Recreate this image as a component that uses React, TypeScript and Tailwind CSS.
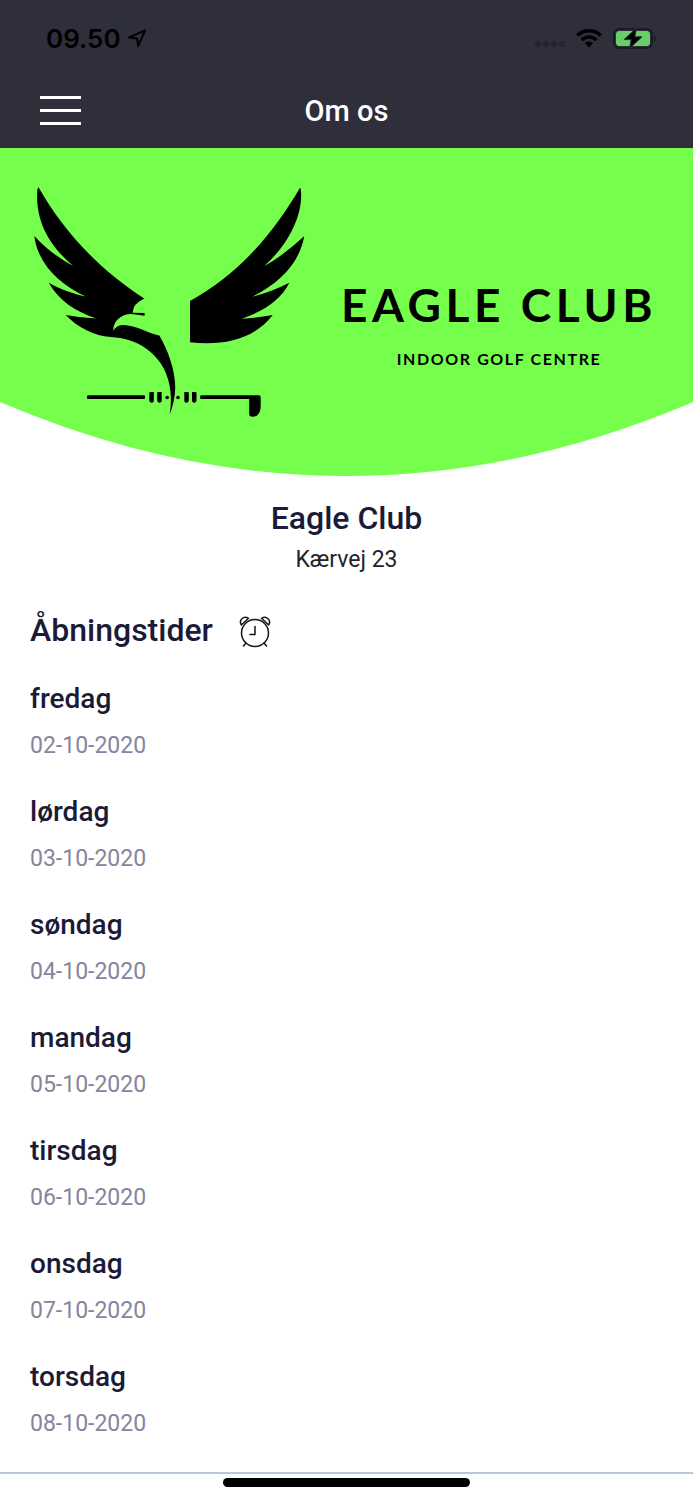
const openingDays = [
  { day: "fredag", date: "02-10-2020" },
  { day: "lørdag", date: "03-10-2020" },
  { day: "søndag", date: "04-10-2020" },
  { day: "mandag", date: "05-10-2020" },
  { day: "tirsdag", date: "06-10-2020" },
  { day: "onsdag", date: "07-10-2020" },
  { day: "torsdag", date: "08-10-2020" },
];

function LocationArrow() {
  return (
    <svg className="h-5 w-5" viewBox="0 0 20 20" fill="none" stroke="black" strokeWidth="2" strokeLinejoin="round">
      <path d="M18 2.5 L2.2 9.4 L10 10.4 L11.2 17.8 Z" />
    </svg>
  );
}

function WifiIcon() {
  return (
    <svg className="h-5 w-7" viewBox="0 0 28 20">
      <path d="M1 6.3 A18.5 18.5 0 0 1 27 6.3 L24.4 8.8 A14.8 14.8 0 0 0 3.6 8.8 Z" />
      <path d="M5.4 10.7 A12.3 12.3 0 0 1 22.6 10.7 L20 13.3 A8.6 8.6 0 0 0 8 13.3 Z" />
      <path d="M9.8 15.1 A6 6 0 0 1 18.2 15.1 L14 19.6 Z" />
    </svg>
  );
}

function BatteryIcon() {
  return (
    <svg className="h-6 w-11" viewBox="0 0 44 24">
      <rect x="1" y="3" width="38" height="19" rx="5.5" fill="none" stroke="#1c1b25" strokeWidth="2" />
      <rect x="3" y="5" width="34" height="15" rx="3.5" fill="#68ce67" />
      <path d="M41 9 a4.5 4.5 0 0 1 0 7 Z" fill="#1c1b25" />
      <path d="M23.5 2 L11 13.6 H18.2 L16.5 22.5 L29 10.8 H21.8 Z" stroke="#2f2e3b" strokeWidth="1" />
    </svg>
  );
}

function EagleLogo() {
  return (
    <svg className="w-[271px] shrink-0" viewBox="34 187 271 230" role="img" aria-label="Eagle Club">
      <path d="M38.5 187.3 C62 228 93 265 144.3 298.5 Q132.5 304 132.7 312.7 L144.6 313 V315.8 L131.7 314 C120 314 113 322 113.3 330.8 Q116.5 325 123.3 325 C137 325.5 146 332.5 159.3 335.5 C168 350 175.5 371 175.2 388 Q175 401 169.7 414.5 Q171.5 403 170.5 392 C167.5 358 141 339 113.3 337.3 C94 336.5 77 327 65.7 315 Q80 317.8 96 318.4 C76 311.5 59 301 48.7 282.7 C61 289.5 74 294 85.7 296.4 C59 284.5 37.5 263 34.3 236 C47 249.5 60 259 73.3 265.9 C51 247.5 34.5 222 37.4 189 Z" />
      <path d="M300 187.8 C272 236 238 274 190 301 V342.3 C223 346 254 339.5 272.7 315 Q257 317.8 241.7 318.7 C263 311.5 281 300 289.3 282.7 Q271 292 252.3 296.6 C280 283 299.5 263 304.3 236 C290 249 276 260 264.3 266 C286 247 304 216 300.8 189 Z" />
      <rect x="87" y="395.3" width="58" height="3.8" rx="1.2" />
      <path d="M149.3 393 q0-1 1-1 h3.5 v8 q0 2.8-2 2.8 q-2.5 0-2.5-3 Z" />
      <path d="M157.2 393 q0-1 1-1 h3.5 v8 q0 2.8-2 2.8 q-2.5 0-2.5-3 Z" />
      <circle cx="167.2" cy="397.5" r="1.8" />
      <circle cx="178" cy="397.5" r="1.8" />
      <path d="M184.3 392 h3.5 q1 0 1 1 v7 q0 2.8-2.6 2.8 q-1.9 0-1.9-2.8 Z" />
      <path d="M192 392 h3.5 q1 0 1 1 v7 q0 2.8-2.6 2.8 q-1.9 0-1.9-2.8 Z" />
      <path d="M201.3 395.3 H258.7 Q260.7 395.3 260.7 397.5 V406 Q260.7 416.7 252.3 416.7 Q249.2 416.7 249.2 413.5 V399.1 H201.3 Q200 399.1 200 397.2 Q200 395.3 201.3 395.3 Z" />
    </svg>
  );
}

function AlarmClock() {
  return (
    <svg className="h-8 w-8" viewBox="0 0 32 32" fill="none" stroke="#15151c" strokeWidth="1.5" strokeLinecap="round" strokeLinejoin="round">
      <circle cx="16" cy="17" r="13.5" />
      <path d="M16 10.5 V18.5 H11" />
      <path d="M7 27 L4.5 30 M25 27 L27.5 30" />
      <path d="M2.3 9 C-.5 4 4.5 -.5 9.5 2.3 Z" />
      <path d="M29.7 9 C32.5 4 27.5 -.5 22.5 2.3 Z" />
    </svg>
  );
}

function Header() {
  return (
    <header className="bg-[#2f2e3b]">
      <div className="flex h-[74px] items-center justify-between pt-0.5 pr-9 pl-[46px]">
        <div className="flex items-center gap-1.5">
          <span className="pt-0.5 font-['Inter',sans-serif] text-[26px] leading-8 font-semibold text-black">09.50</span>
          <LocationArrow />
        </div>
        <div className="flex items-center gap-2.5">
          <div className="flex gap-0.5 pt-3">
            <span className="size-1.5 rounded-full bg-[#242430]" />
            <span className="size-1.5 rounded-full bg-[#242430]" />
            <span className="size-1.5 rounded-full bg-[#242430]" />
            <span className="size-1.5 rounded-full bg-[#242430]" />
          </div>
          <WifiIcon />
          <BatteryIcon />
        </div>
      </div>
      <div className="grid h-[74px] grid-cols-[1fr_auto_1fr] items-center px-10">
        <button type="button" aria-label="Menu" className="flex w-[41px] flex-col gap-[10px] pb-0.5">
          <span className="h-[3px] w-full bg-white" />
          <span className="h-[3px] w-full bg-white" />
          <span className="h-[3px] w-full bg-white" />
        </button>
        <h1 className="text-[29px] leading-9 font-medium text-white">Om os</h1>
      </div>
    </header>
  );
}

function Hero() {
  return (
    <section className="relative">
      <svg className="absolute inset-0 h-full w-full" viewBox="0 0 693 329" preserveAspectRatio="none">
        <path d="M0 0 H693 V254 Q346 402 0 254 Z" fill="#75ff4c" />
      </svg>
      <div className="relative flex items-start pt-[39px] pb-[60px] pl-[34px]">
        <EagleLogo />
        <div className="flex-1 pt-[94px] text-center font-['Lato',sans-serif] font-bold whitespace-nowrap text-black">
          <p className="text-[46px] leading-[48px] tracking-widest">EAGLE CLUB</p>
          <p className="mt-[18px] text-base leading-6 tracking-widest">INDOOR GOLF CENTRE</p>
        </div>
      </div>
    </section>
  );
}

export default function App() {
  return (
    <div className="flex min-h-screen flex-col bg-white font-['Roboto',sans-serif] text-[#1b1b38]">
      <Header />
      <main className="flex-1">
        <Hero />
        <section className="pt-[21px] text-center">
          <h2 className="text-[32px] leading-10 font-medium">Eagle Club</h2>
          <p className="mt-1.5 text-[23px] leading-8 text-[#23232f]">Kærvej 23</p>
        </section>
        <section className="px-[30px] pt-[34px] pb-7">
          <div className="flex items-center gap-[26px]">
            <h2 className="text-[32px] leading-10 font-medium">Åbningstider</h2>
            <div className="pt-1">
              <AlarmClock />
            </div>
          </div>
          <ul className="mt-[31px] space-y-8">
            {openingDays.map(({ day, date }) => (
              <li key={date}>
                <h3 className="text-[28px] leading-9 font-medium">{day}</h3>
                <p className="mt-[13px] text-[23px] leading-8 text-[#85859c]">{date}</p>
              </li>
            ))}
          </ul>
        </section>
      </main>
      <footer className="flex h-7 justify-center border-t-2 border-[#b8c7d9] pt-1">
        <div className="h-[9px] w-[247px] rounded-full bg-black" />
      </footer>
    </div>
  );
}
